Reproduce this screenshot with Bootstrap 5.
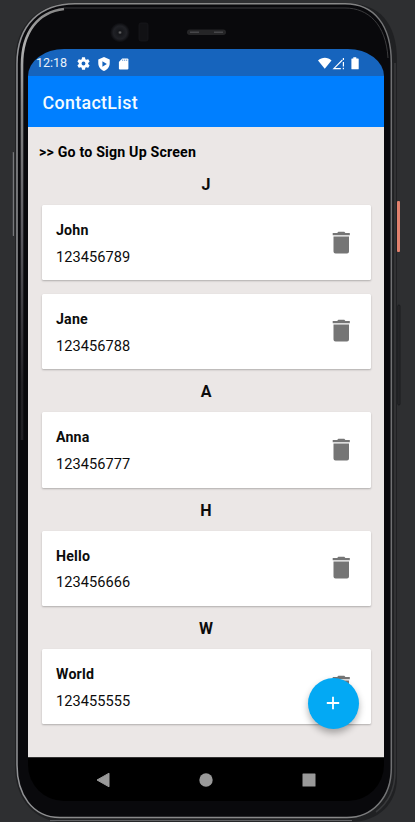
<!DOCTYPE html>
<html lang="en">
<head>
<meta charset="utf-8">
<meta name="viewport" content="width=device-width, initial-scale=1">
<title>ContactList</title>
<link rel="stylesheet" href="https://cdn.jsdelivr.net/npm/bootstrap@5.3.0/dist/css/bootstrap.min.css">
<style>
html,body{height:100%;overflow:hidden}
body{background:#2e2f31;font-family:Roboto,"Liberation Sans",sans-serif;color:#0c0c0c}
.stage{width:415px;height:822px;padding:49px 31px 21px 28px}
.shell{left:0;top:0;width:415px;height:822px}
.screen{width:356px;height:752px}
.statusbar{height:27px;background:#1664bd;border-radius:36px 36px 0 0/27px 27px 0 0;padding:2px 25px 0 8px;color:#e8f0fa;font-size:12.6px}
.clock{width:41px;line-height:1;letter-spacing:-.05px}
.appbar{height:51px;background:#007fff;color:#f4fbff;padding:3px 14.5px 0;font-size:17.8px;font-weight:500;letter-spacing:.36px}
.content{height:630px;background:#ebe7e6;padding:0 13.5px}
.signup{font-size:14.2px;font-weight:700;color:#000;line-height:20px;margin:15px 0 0 -2.5px;letter-spacing:.18px}
.letter{font-size:16px;font-weight:700;line-height:20px;height:43.1px;padding-top:13px;margin:0}
.letter.first{height:43px}
.contact{height:75.3px;background:#fff;border:0;border-radius:1.5px;box-shadow:0 1px 2px rgba(0,0,0,.25);padding:15px 18px 0 14.5px}
.contact + .contact{margin-top:13.6px}
.who{font-size:14.2px;font-weight:700;line-height:20px;letter-spacing:.18px}
.phone{font-size:14.6px;line-height:20px;margin-top:6.8px;letter-spacing:.05px}
.trash{width:21px;height:24px;margin-top:10.6px;margin-right:.7px;fill:#757575}
.fab{width:51px;height:51px;right:25.2px;bottom:72.500px;background:#03a9f4;box-shadow:0 4px 7px rgba(0,0,0,.3)}
.fab:hover{background:#03a9f4}
.navkeys{height:44px;background:#000;border-radius:0 0 36px 36px;border-top:1px solid #333;padding-right:1px;gap:89px}
</style>
<script src="https://cdn.jsdelivr.net/npm/bootstrap@5.3.0/dist/js/bootstrap.bundle.min.js"></script>
</head>
<body>
<div class="stage position-relative overflow-hidden">
<!-- phone casing -->
<svg class="shell position-absolute" viewBox="0 0 415 822" aria-hidden="true">
<defs>
<linearGradient id="rim" x1="0" x2="1" y1="0" y2="0"><stop offset="0" stop-color="#929396"/><stop offset=".15" stop-color="#8a8a8a"/><stop offset=".85" stop-color="#8a8a8a"/><stop offset="1" stop-color="#707173"/></linearGradient>
<linearGradient id="inner" gradientUnits="userSpaceOnUse" x1="0" x2="0" y1="9" y2="757"><stop offset="0" stop-color="#888"/><stop offset=".05" stop-color="#b0b0b0"/><stop offset=".13" stop-color="#858585"/><stop offset=".3" stop-color="#5a595f"/><stop offset=".5" stop-color="#222125"/><stop offset="1" stop-color="#161519"/></linearGradient>
<radialGradient id="lens"><stop offset="0" stop-color="#777"/><stop offset=".2" stop-color="#16171b"/><stop offset=".65" stop-color="#202126"/><stop offset="1" stop-color="#08080b"/></radialGradient>
</defs>
<rect x="12.8" y="152" width="1.2" height="84" rx=".6" fill="#77787b"/>
<rect x="397" y="201" width="3" height="51" rx="1" fill="#e2816d"/>
<rect x="397.800" y="305" width="2.200" height="100" rx="1" fill="#292a2c" stroke="#17181a" stroke-width=".8"/>
<path d="M75 3H345C380 3 397 23 397 61V778C397 804 378 822 350 822H58C30 818 15 795 15 767V63C15 23 39 3 75 3Z" fill="#202123"/>
<path d="M75 3.800H345C374 3.800 391.300 25 391.300 63V768C391.300 798 372 817.500 347 817.500H60C32 817.500 17 794 17 765V64C17 24 41 3.800 75 3.800Z" fill="#09090c" stroke="url(#rim)" stroke-width="1.500"/>
<path d="M395 63V772C395 790 388 803 376 812" fill="none" stroke="#37383a" stroke-width="1.600"/>
<path d="M50 820.600H352" stroke="#66676a" stroke-width="1"/>
<path d="M22 440V65C22 32 38 12 64 9" fill="none" stroke="url(#inner)" stroke-width="2.600"/>
<path d="M64 8H345C368 8 386 24 388 58" fill="none" stroke="#3b3b3d" stroke-width="1"/>
<circle cx="120" cy="32.500" r="10" fill="url(#lens)"/>
<rect x="139" y="23" width="9" height="18" rx="2" fill="#111114" stroke="#1b1b1e" stroke-width=".6"/>
<rect x="187" y="29.500" width="39" height="5.500" rx="2.700" fill="#252527"/>
<path d="M190 32.300h9M214 32.300h9" stroke="#47474a" stroke-width="1.400"/>
</svg>

<div class="screen position-relative d-flex flex-column">
<div class="statusbar d-flex align-items-center">
<span class="clock">12:18</span>
<svg width="13" height="13" viewBox="2 2 20 20" fill="#fff"><path d="M19.14 12.94c.04-.3.06-.61.06-.94 0-.32-.02-.64-.07-.94l2.03-1.58a.49.49 0 0 0 .12-.61l-1.92-3.32a.49.49 0 0 0-.59-.22l-2.39.96a7 7 0 0 0-1.62-.94l-.36-2.54a.48.48 0 0 0-.48-.41h-3.84a.47.47 0 0 0-.47.41l-.36 2.54c-.59.24-1.13.57-1.62.94l-2.39-.96a.47.47 0 0 0-.59.22L2.74 8.87a.47.47 0 0 0 .12.61l2.03 1.58c-.05.3-.09.63-.09.94s.02.64.07.94l-2.03 1.58a.49.49 0 0 0-.12.61l1.92 3.32c.12.22.37.29.59.22l2.39-.96c.5.38 1.03.7 1.62.94l.36 2.54c.05.24.24.41.48.41h3.84c.24 0 .44-.17.47-.41l.36-2.54c.59-.24 1.13-.56 1.62-.94l2.39.96c.22.08.47 0 .59-.22l1.92-3.32a.47.47 0 0 0-.12-.61zM12 15a3 3 0 1 1 0-6 3 3 0 0 1 0 6z"/></svg>
<svg class="ms-2" width="12" height="14" viewBox="3 1 18 22" fill="#fff" fill-rule="evenodd"><path d="M12 1 3 5v6c0 5.55 3.84 10.74 9 12 5.16-1.26 9-6.45 9-12V5zM9.5 7.5 16.5 12l-7 4.5z"/></svg>
<svg class="ms-2" width="11" height="12" viewBox="-.7 0 11 12"><path d="M3.5.5h5.2A1 1 0 0 1 9.7 1.500V10.500a1 1 0 0 1-1 1H1.200a1 1 0 0 1-1-1V4z" fill="#fff"/><path d="M4 1.500v1.500M6 1.500v1.500M8 1.500v1.500" stroke="#1664bd" stroke-width=".6"/></svg>
<svg class="ms-auto" width="41" height="13" viewBox="0 0 41 13"><path d="M0 3.400C4-.3 9.800-.3 13.500 3.400L6.750 11.800z" fill="#fff"/><path d="M22.800 11.600H15.800L24.400 3" fill="none" stroke="#fff" stroke-width="1.100"/><path d="M25.400 1v2M25.400 5v4.500M25.400 10.700v1.500" stroke="#fff" stroke-width="1.200"/><path d="M33.500 1.500h1.800V.2h3v1.300h1.800q.6 0 .6.600v9.600q0 .6-.6.600h-6.100q-.6 0-.6-.6V2.100q0-.6.600-.6z" fill="#fff"/></svg>
</div>
<header class="appbar d-flex align-items-center"><span>ContactList</span></header>
<main class="content">
<p class="signup">&gt;&gt; Go to Sign Up Screen</p>
<h2 class="letter first text-center">J</h2>
<article class="contact card flex-row justify-content-between"><div><div class="who">John</div><div class="phone">123456789</div></div><svg class="trash" viewBox="0 0 21 24"><path d="M2.500 5.500h15.500v15q0 2-2 2H4.500q-2 0-2-2zM1.700 1.900H6.200L7.300.7h6l1.100 1.200h4.400V4.300H1.700z"/></svg></article>
<article class="contact card flex-row justify-content-between"><div><div class="who">Jane</div><div class="phone">123456788</div></div><svg class="trash" viewBox="0 0 21 24"><path d="M2.500 5.500h15.500v15q0 2-2 2H4.500q-2 0-2-2zM1.700 1.900H6.200L7.300.7h6l1.100 1.200h4.400V4.300H1.700z"/></svg></article>
<h2 class="letter text-center">A</h2>
<article class="contact card flex-row justify-content-between"><div><div class="who">Anna</div><div class="phone">123456777</div></div><svg class="trash" viewBox="0 0 21 24"><path d="M2.500 5.500h15.500v15q0 2-2 2H4.500q-2 0-2-2zM1.700 1.900H6.200L7.300.7h6l1.100 1.200h4.400V4.300H1.700z"/></svg></article>
<h2 class="letter text-center">H</h2>
<article class="contact card flex-row justify-content-between"><div><div class="who">Hello</div><div class="phone">123456666</div></div><svg class="trash" viewBox="0 0 21 24"><path d="M2.500 5.500h15.500v15q0 2-2 2H4.500q-2 0-2-2zM1.700 1.900H6.200L7.300.7h6l1.100 1.200h4.400V4.300H1.700z"/></svg></article>
<h2 class="letter text-center">W</h2>
<article class="contact card flex-row justify-content-between"><div><div class="who">World</div><div class="phone">123455555</div></div><svg class="trash" viewBox="0 0 21 24"><path d="M2.500 5.500h15.500v15q0 2-2 2H4.500q-2 0-2-2zM1.700 1.900H6.200L7.300.7h6l1.100 1.200h4.400V4.300H1.700z"/></svg></article>
</main>
<nav class="navkeys d-flex align-items-center justify-content-center">
<svg width="14" height="16" viewBox="0 0 14 16"><path d="M13 1.200v13.600L1 8z" fill="#999" stroke="#999" stroke-linejoin="round"/></svg>
<svg width="14" height="14" viewBox="0 0 14 14"><circle cx="7" cy="7" r="6.700" fill="#999"/></svg>
<svg width="14" height="14" viewBox="0 0 14 14"><rect x=".5" y=".5" width="13" height="13" rx=".6" fill="#999"/></svg>
</nav>
<button class="fab btn rounded-circle border-0 p-0 position-absolute d-flex align-items-center justify-content-center" aria-label="Add contact"><svg width="14" height="14" viewBox="0 0 14 14"><path d="M7 .8v12.400M.8 7h12.400" stroke="#fff" stroke-width="1.800"/></svg></button>
</div>
</div>
</body>
</html>
